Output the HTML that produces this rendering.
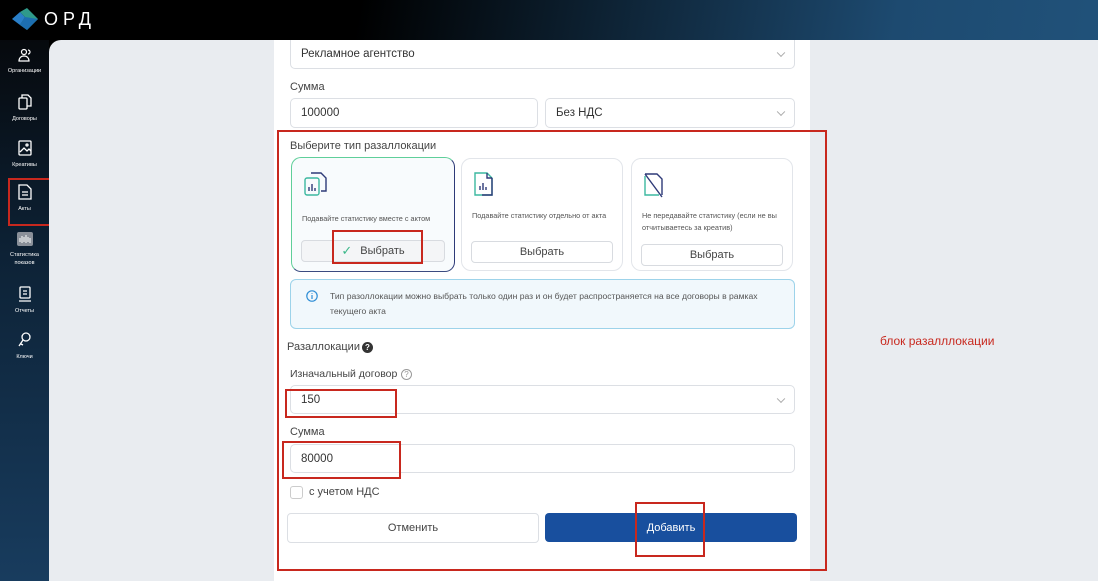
<!DOCTYPE html><html><head><meta charset="utf-8"><style>
*{box-sizing:border-box;margin:0;padding:0}
body{width:1098px;height:581px;overflow:hidden;font-family:"Liberation Sans",sans-serif;background:linear-gradient(100deg,#000 0%,#000 30%,#1d4a70 75%,#22557e 100%);position:relative;color:#333}
.side{position:absolute;left:0;top:40px;width:49px;height:541px;background:linear-gradient(180deg,#06090d 0%,#0d2236 40%,#183c5e 100%)}
.main{position:absolute;left:49px;top:40px;width:1049px;height:541px;background:#e9ecf0;border-top-left-radius:12px}
.panel{position:absolute;left:274px;top:40px;width:536px;height:541px;background:#fff}
.a{position:absolute}
.inp{position:absolute;border:1px solid #dcdfe4;border-radius:5px;background:#fff;font-size:11.5px;color:#333;padding-left:10px;display:flex;align-items:center}
.chev{position:absolute;right:10px;top:50%;width:6px;height:6px;border-right:1px solid #aaa;border-bottom:1px solid #aaa;transform:translateY(-70%) rotate(45deg)}
.lbl{position:absolute;font-size:11px;color:#444}
.card{position:absolute;border:1px solid #e2e5ea;border-radius:10px;background:#fff}
.card p{position:absolute;left:10px;font-size:7.3px;color:#555;line-height:12px;white-space:nowrap}
.btn{position:absolute;left:9px;right:9px;height:22px;border:1px solid #d8dbe0;border-radius:4px;font-size:11px;color:#444;display:flex;align-items:center;justify-content:center}
.red{position:absolute;border:2px solid #c8281e}
.nav{position:absolute;left:0;width:49px;text-align:center;color:#fff;font-size:5.5px;line-height:8px}
.nav svg{display:block;margin:0 auto 5px}
</style></head><body>
<div class="a" style="left:12px;top:8px"><svg width="26" height="22" viewBox="0 0 26 22"><path d="M0 11 L8 4 L13 9 L8 17Z" fill="#2a7fc8"/><path d="M8 4 L15 0 L26 11 L15 22 L8 17 L13 9Z" fill="#2f9a8a"/><path d="M13 9 L26 11 L15 22 L8 17Z" fill="#1d6fb0"/></svg></div>
<div class="a" style="left:44px;top:9px;color:#fff;font-size:18px;letter-spacing:5px">ОРД</div>
<div class="side">
<div class="nav" style="top:8px"><svg width="14" height="14" viewBox="0 0 14 14" fill="none" stroke="#fff" stroke-width="1.2"><circle cx="6" cy="4" r="2.5"/><path d="M1 13c0-3 2-5 5-5s5 2 5 5z"/><path d="M10 2a2 2 0 010 4"/></svg>Организации</div>
<div class="nav" style="top:54px"><svg width="14" height="16" viewBox="0 0 14 16" fill="none" stroke="#fff" stroke-width="1.3"><rect x="1" y="4" width="8" height="11" rx="1"/><path d="M4 4V1h6l3 3v8h-4"/></svg>Договоры</div>
<div class="nav" style="top:100px"><svg width="14" height="16" viewBox="0 0 14 16" fill="none" stroke="#fff" stroke-width="1.3"><rect x="1" y="1" width="12" height="14" rx="1"/><path d="M2 12l4-4 3 3 2-2 2 2"/><circle cx="9" cy="5" r="1"/></svg>Креативы</div>
<div class="nav" style="top:144px"><svg width="14" height="16" viewBox="0 0 14 16" fill="none" stroke="#fff" stroke-width="1.3"><path d="M1 1h8l4 4v10H1z"/><path d="M4 8h6M4 11h6"/></svg>Акты</div>
<div class="nav" style="top:192px"><svg width="16" height="14" viewBox="0 0 16 14"><rect width="16" height="14" rx="2" fill="#8a9099"/><path d="M3 10V6M5 11V4M7 10V5M9 11V3M11 10V5M13 11V6" stroke="#fff" stroke-width="1"/></svg>Статистика<br>показов</div>
<div class="nav" style="top:246px"><svg width="14" height="16" viewBox="0 0 14 16" fill="none" stroke="#fff" stroke-width="1.3"><rect x="2" y="1" width="10" height="11" rx="1"/><path d="M1 15h12M5 5h4M5 8h4"/></svg>Отчеты</div>
<div class="nav" style="top:292px"><svg width="14" height="16" viewBox="0 0 14 16" fill="none" stroke="#fff" stroke-width="1.3"><circle cx="8" cy="5" r="4"/><path d="M5 8L1 14M3 12l2 1"/></svg>Ключи</div>
</div>
<div class="red" style="left:8px;top:178px;width:74px;height:48px"></div>
<div class="main"></div>
<div class="panel"></div>
<div class="inp" style="left:290px;top:40px;width:505px;height:29px;border-top:none;border-radius:0 0 5px 5px">Рекламное агентство<span class="chev"></span></div>
<div class="lbl" style="left:290px;top:81px">Сумма</div>
<div class="inp" style="left:290px;top:98px;width:248px;height:30px">100000</div>
<div class="inp" style="left:545px;top:98px;width:250px;height:30px">Без НДС<span class="chev"></span></div>
<div class="lbl" style="left:290px;top:140px">Выберите тип разаллокации</div>
<div class="card" style="left:291px;top:157px;width:164px;height:115px;border:1.5px solid #5fcf9a;border-right-color:#2e3a78;border-bottom-color:#3a4a80;background:#f8fbfd">
<svg class="a" style="left:10px;top:12px" width="28" height="28" viewBox="0 0 28 28" fill="none" stroke-width="1.4"><path d="M9 3h10l5 5v13h-5" stroke="#2e3a78"/><rect x="3" y="8" width="14" height="17" rx="2" stroke="#3cb8a0"/><path d="M7 21v-4M10 21v-7M13 21v-3" stroke="#2e3a78"/></svg>
<p style="top:55px">Подавайте статистику вместе с актом</p>
<div class="btn" style="top:82px;background:#f4f5f7"><span style="color:#3cb88a;margin-right:8px;font-size:13px">✓</span>Выбрать</div></div>
<div class="card" style="left:461px;top:158px;width:162px;height:113px">
<svg class="a" style="left:10px;top:11px" width="24" height="28" viewBox="0 0 24 28" fill="none" stroke-width="1.4"><path d="M3 3h12l5 5v17H3z" stroke="#3cb8a0"/><path d="M15 3v5h5M20 8v17H10" stroke="#2e3a78"/><path d="M8 20v-4M11 20v-7M14 20v-3" stroke="#2e3a78"/></svg>
<p style="top:51px">Подавайте статистику отдельно от акта</p>
<div class="btn" style="top:82px">Выбрать</div></div>
<div class="card" style="left:631px;top:158px;width:162px;height:113px">
<svg class="a" style="left:10px;top:12px" width="24" height="28" viewBox="0 0 24 28" fill="none" stroke-width="1.4"><path d="M3 5v19h14" stroke="#3cb8a0"/><path d="M3 3h12l5 5v16M3 3l17 23" stroke="#2e3a78"/></svg>
<p style="top:51px">Не передавайте статистику (если не вы<br>отчитываетесь за креатив)</p>
<div class="btn" style="top:85px">Выбрать</div></div>
<div class="a" style="left:290px;top:279px;width:505px;height:50px;border:1px solid #9dd3ea;border-radius:6px;background:#f1f8fc"></div>
<svg class="a" style="left:306px;top:290px" width="12" height="12" viewBox="0 0 12 12" fill="none" stroke="#2f8ed6" stroke-width="1.2"><circle cx="6" cy="6" r="5.2"/><path d="M6 5v4M6 3v.8"/></svg>
<div class="a" style="left:330px;top:289px;font-size:8.6px;color:#555;line-height:15px;width:470px;white-space:nowrap">Тип разоллокации можно выбрать только один раз и он будет распространяется на все договоры в рамках<br>текущего акта</div>
<div class="lbl" style="left:287px;top:341px">Разаллокации</div>
<div class="a" style="left:362px;top:342px;width:11px;height:11px;border-radius:50%;background:#333;color:#fff;font-size:8px;text-align:center;line-height:11px;font-weight:bold">?</div>
<div class="lbl" style="left:290px;top:368px;font-size:10.5px">Изначальный договор</div>
<div class="a" style="left:401px;top:369px;width:11px;height:11px;border-radius:50%;border:1px solid #999;color:#999;font-size:8px;text-align:center;line-height:9px">?</div>
<div class="inp" style="left:290px;top:385px;width:505px;height:29px">150<span class="chev"></span></div>
<div class="lbl" style="left:290px;top:426px">Сумма</div>
<div class="inp" style="left:290px;top:444px;width:505px;height:29px">80000</div>
<div class="a" style="left:290px;top:486px;width:13px;height:13px;border:1px solid #ccc;border-radius:3px"></div>
<div class="lbl" style="left:309px;top:486px;font-size:11px">с учетом НДС</div>
<div class="a" style="left:287px;top:513px;width:252px;height:30px;border:1px solid #dcdfe4;border-radius:4px;font-size:11px;color:#444;display:flex;align-items:center;justify-content:center">Отменить</div>
<div class="a" style="left:545px;top:513px;width:252px;height:29px;background:#184f9e;border-radius:4px;font-size:11px;color:#fff;display:flex;align-items:center;justify-content:center">Добавить</div>
<div class="red" style="left:277px;top:130px;width:550px;height:441px"></div>
<div class="red" style="left:332px;top:230px;width:91px;height:34px"></div>
<div class="red" style="left:285px;top:389px;width:112px;height:29px"></div>
<div class="red" style="left:282px;top:441px;width:119px;height:38px"></div>
<div class="red" style="left:635px;top:502px;width:70px;height:55px"></div>
<div class="a" style="left:880px;top:334px;font-size:12px;color:#c8281e">блок разалллокации</div>
</body></html>
